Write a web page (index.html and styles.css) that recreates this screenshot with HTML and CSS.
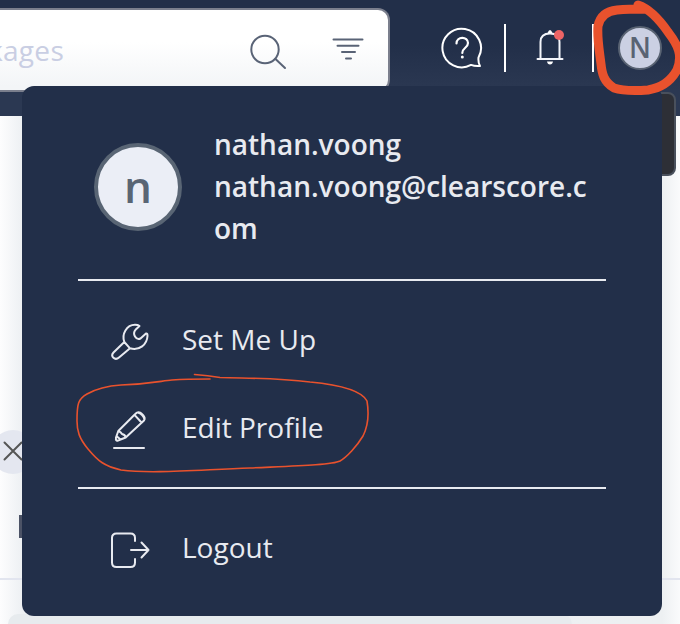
FILE: index.html
```
<!DOCTYPE html>
<html lang="en">
<head>
<meta charset="utf-8">
<title>Packages</title>
<link rel="stylesheet" href="styles.css">
</head>
<body>
<header class="topbar">
  <div class="search">
    <span class="placeholder">kages</span>
    <svg class="search-icon" width="38" height="38" viewBox="0 0 38 38"><circle cx="16" cy="16.5" r="13.700"/><path d="M26.500 26L36 35"/></svg>
    <svg class="filter-icon" width="32" height="24" viewBox="0 0 32 24"><path d="M1.500 2.500h29M5.500 8.700h21M10 15h13M14 21.400h5"/></svg>
  </div>
  <svg class="help-icon" width="42" height="42" viewBox="0 0 42 42"><path d="M37.500 30.500A19.300 19.300 0 1 0 30 37.900Q34 39.500 39 39Q37 36 37.500 30.500"/><path class="question" d="M15.500 16.500C15.500 9 27 9 27 16C27 21 21.300 20.500 21.300 26"/><circle class="dot" cx="21.300" cy="30" r="1.500"/></svg>
  <span class="divider"></span>
  <div class="bell">
    <svg width="28" height="38" viewBox="0 0 28 38"><path d="M4.500 30V14C4.500 8 8.500 5.500 14 5.500S23.500 8 23.500 14V30M1.500 31H26.500"/><path class="solid" d="M11.500 5Q14 -1 16.500 5ZM11 33.500H17Q16.500 36.500 14 36.500T11 33.500Z"/></svg>
    <span class="alert"></span>
  </div>
  <span class="divider second"></span>
  <div class="user">N</div>
</header>
<main class="page">
  <div class="tooltip"></div>
  <div class="close"><svg width="20" height="20" viewBox="0 0 20 20"><path d="M1.500 1.500L18.500 18.500M18.500 1.500L1.500 18.500"/></svg></div>
  <div class="mark"></div>
  <div class="rule"></div>
  <div class="card"></div>
</main>
<section class="menu">
  <div class="profile">
    <div class="avatar">n</div>
    <div class="identity"><div>nathan.voong</div><div>nathan.voong@clearscore.com</div></div>
  </div>
  <nav class="group">
    <a class="item"><svg width="40" height="40" viewBox="0 0 40 40"><path d="M14.300 22L3.500 32.500C0 36.500 5 41 9 37.500L20 28.300M14.300 22C11.500 14 16.500 4.800 25 4.800Q28 4.800 29.500 6L25.500 9.800C22 14 26 20.500 30.500 18.500L36 13.500Q37.500 13 37.500 16C37 24.500 29.500 31 20 28.300Z"/></svg><span>Set Me Up</span></a>
    <a class="item"><svg width="40" height="40" viewBox="0 0 40 40"><path d="M8.300 23L25.500 5.700Q28.500 2.500 32 6Q36 9.500 34 12.500L15.700 29.500L8 32.500Q5.500 33.500 6 29.500ZM8.300 23Q11 24 12 26Q15 26.500 15.700 29.500M7 28.500L10.500 31.500M24.500 6.800L31.500 14.500M28 4.500Q33.500 6.500 34.500 11.500"/><path d="M4 40H34"/></svg><span>Edit Profile</span></a>
  </nav>
  <nav class="group last">
    <a class="item"><svg width="40" height="40" viewBox="0 0 40 40"><path d="M25 11V8Q25 3.500 20.500 3.500H6.500Q2 3.500 2 8V32.500Q2 37 6.500 37H20.500Q25 37 25 32.500V29M21 20H38.500M31.500 12.500L38.500 20L31.500 27.500"/></svg><span>Logout</span></a>
  </nav>
</section>
<svg class="annotation" width="680" height="624" viewBox="0 0 680 624">
  <path class="thick" d="M638 5C650 9 659 19 668 32C678 45 683 55 677 70C671 81 661 88 648 90C635 91 623 91 614 88C604 82 602 74 601 64C599 48 597 38 598 26C600 16 607 11 617 10Q628 9 645 9"/>
  <path class="thin" d="M194.500 374.500Q208 375.500 220 377.500C260 378.500 277 378 310 382C341 385 362 391 367 401C369 413 368 426 363 436C357 446 347 457 340 461C332 465 293 466 250 468C195 470 151 474 121 470C104 466 98 461 88 449C79 438 77 431 77 421C77 404 78 399 87 394C94 390 106 386 121 385C149 384 161 381 172 380Q186 379 210 379"/>
</svg>
</body>
</html>
```
FILE: styles.css
```
* { box-sizing: border-box; }
body {
  margin: 0;
  width: 680px;
  height: 624px;
  position: relative;
  overflow: hidden;
  background: #fff;
  font-family: "Open Sans", sans-serif;
}
svg {
  display: block;
  fill: none;
  stroke-width: 2;
  stroke-linecap: round;
  stroke-linejoin: round;
}
.topbar {
  display: flex;
  height: 116px;
  background: linear-gradient(#222f49 45px, #2b3852 90px);
}
.search {
  display: flex;
  flex: none;
  width: 390px;
  height: 84px;
  margin-top: 8px;
  border: 2px solid #7b7f8d;
  border-left: 0;
  border-radius: 0 12px 12px 0;
  background: linear-gradient(#fff 40%, #f3f5f7 95%);
}
.placeholder {
  width: 249px;
  margin-left: -12px;
  padding-top: 21px;
  color: #c9cee3;
  font-size: 28px;
  line-height: 38px;
  letter-spacing: .3px;
}
.search-icon { margin: 23px 0 0 12px; stroke: #596376; }
.filter-icon { margin: 27px 0 0 45px; stroke: #596376; }
.help-icon { flex: none; margin: 27px 0 0 51px; stroke: #fff; }
.question { stroke-width: 2.200; }
.dot { fill: #fff; stroke: none; }
.divider { flex: none; width: 2px; height: 48px; margin: 24px 0 0 21px; background: #fff; }
.bell { position: relative; width: 28px; height: 38px; margin: 28px 0 0 30px; stroke: #f4f5fa; }
.solid { fill: #fff; stroke: none; }
.alert { position: absolute; left: 18px; top: 2px; width: 10px; height: 10px; border-radius: 50%; background: #ed6465; }
.second { margin-left: 28px; }
.user {
  width: 44px;
  height: 44px;
  flex: none;
  margin: 26px 0 0 24px;
  border: 2px solid #596373;
  border-radius: 50%;
  background: #cbd0e3;
  color: #596373;
  font-size: 28px;
  font-weight: 600;
  line-height: 39px;
  text-align: center;
}
.page {
  height: 508px;
  display: flex;
  flex-direction: column;
  background: linear-gradient(90deg, #fdfdfe, #eceff2 24px, #edf0f2 662px, #fafbfc);
}
.tooltip { align-self: flex-end; flex: none; width: 70px; height: 84px; margin: -24px 4px 0 0; border: 2px solid #49505c; border-radius: 8px; background: #2d2f36; }
.close { flex: none; width: 44px; height: 44px; margin: 254px 0 0 -9px; padding: 11px 0 0 12px; border-radius: 50%; background: #e4e7f0; }
.close svg { stroke: #555655; }
.mark { flex: none; width: 20px; height: 23px; margin: 41px 0 0 19px; background: #4c5366; }
.rule { flex: none; height: 2px; margin-top: 40px; background: #e2e5ef; }
.card { flex: none; width: 564px; height: 10px; margin: 34px 0 0 8px; border-radius: 10px 10px 0 0; background: #e7ebee; }
.menu {
  position: absolute;
  left: 22px;
  top: 86px;
  width: 640px;
  height: 530px;
  padding: 0 56px;
  border-radius: 12px;
  background: #222f49;
  color: #e8eaf0;
  font-size: 28px;
}
.profile { display: flex; height: 193px; padding: 37px 0 0 16px; }
.avatar {
  flex: none;
  width: 88px;
  height: 88px;
  margin-top: 20px;
  border: 4px solid #596574;
  border-radius: 50%;
  background: #ebeef6;
  color: #596574;
  font-size: 44px;
  font-weight: 600;
  line-height: 79px;
  text-align: center;
}
.identity { width: 376px; margin-left: 32px; font-weight: 600; line-height: 42px; overflow-wrap: anywhere; }
.group { height: 208px; padding-top: 15px; border-top: 2px solid #e8eaf0; }
.item { display: flex; align-items: center; height: 88px; padding-left: 32px; }
.item svg { margin-right: 32px; stroke: #e8eaf0; flex: none; overflow: visible; }
.item span { padding-bottom: 2px; }
.last { height: 120px; padding-top: 17px; }
.last .item span { padding-bottom: 6px; }
.annotation { position: absolute; left: 0; top: 0; stroke: #e9522d; pointer-events: none; }
.thin { stroke-width: 1.600; }
.thick { stroke-width: 9; }
```
